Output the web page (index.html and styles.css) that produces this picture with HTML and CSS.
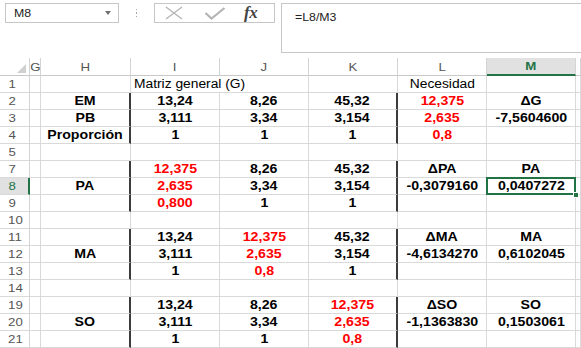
FILE: index.html
```html
<!DOCTYPE html>
<html lang="es">
<head>
<meta charset="utf-8">
<title>Hoja</title>
<link rel="stylesheet" href="styles.css">
</head>
<body>
<div class="topbar">
  <div class="namebox"><span class="nb-text">M8</span><span class="nb-arrow"></span></div>
  <div class="sep"><span></span><span></span><span></span></div>
  <div class="fnbox">
    <svg class="ic-x" width="20" height="14" viewBox="0 0 20 14"><path d="M2 1 L18 13 M18 1 L2 13" stroke="#b4b4b4" stroke-width="1.3" fill="none"/></svg>
    <svg class="ic-ok" width="22" height="14" viewBox="0 0 22 14"><path d="M1.5 7 L7.5 12.5 L20.5 2" stroke="#b4b4b4" stroke-width="2.2" fill="none"/></svg>
    <span class="fx">fx</span>
  </div>
  <div class="formula"><span class="ftext">=L8/M3</span></div>
</div>

<div class="sheet">
  <!-- header row -->
  <div class="c hd corner"><span class="tri"></span></div>
  <div class="c hd"><span class="t">G</span></div>
  <div class="c hd"><span class="t">H</span></div>
  <div class="c hd"><span class="t">I</span></div>
  <div class="c hd"><span class="t">J</span></div>
  <div class="c hd"><span class="t">K</span></div>
  <div class="c hd"><span class="t">L</span></div>
  <div class="c hd sel-col"><span class="t">M</span></div>
  <div class="c hd"></div>

  <!-- 1 -->
  <div class="c rh"><span class="t">1</span></div>
  <div class="c"></div>
  <div class="c"></div>
  <div class="c span2 left"><span class="t r">Matriz general (G)</span></div>
  <div class="c"></div>
  <div class="c"><span class="t r">Necesidad</span></div>
  <div class="c"></div>
  <div class="c"></div>

  <!-- 2 -->
  <div class="c rh"><span class="t">2</span></div>
  <div class="c"></div>
  <div class="c thick"><span class="t b">EM</span></div>
  <div class="c"><span class="t b">13,24</span></div>
  <div class="c"><span class="t b">8,26</span></div>
  <div class="c thick"><span class="t b">45,32</span></div>
  <div class="c"><span class="t b red">12,375</span></div>
  <div class="c"><span class="t b">ΔG</span></div>
  <div class="c"></div>

  <!-- 3 -->
  <div class="c rh"><span class="t">3</span></div>
  <div class="c"></div>
  <div class="c thick"><span class="t b">PB</span></div>
  <div class="c"><span class="t b">3,111</span></div>
  <div class="c"><span class="t b">3,34</span></div>
  <div class="c thick"><span class="t b">3,154</span></div>
  <div class="c"><span class="t b red">2,635</span></div>
  <div class="c"><span class="t b">-7,5604600</span></div>
  <div class="c"></div>

  <!-- 4 -->
  <div class="c rh"><span class="t">4</span></div>
  <div class="c"></div>
  <div class="c thick"><span class="t b">Proporción</span></div>
  <div class="c"><span class="t b">1</span></div>
  <div class="c"><span class="t b">1</span></div>
  <div class="c thick"><span class="t b">1</span></div>
  <div class="c"><span class="t b red">0,8</span></div>
  <div class="c"></div>
  <div class="c"></div>

  <!-- 5 -->
  <div class="c rh"><span class="t">5</span></div>
  <div class="c"></div><div class="c"></div><div class="c"></div><div class="c"></div>
  <div class="c"></div><div class="c"></div><div class="c"></div><div class="c"></div>

  <!-- 7 -->
  <div class="c rh"><span class="t">7</span></div>
  <div class="c"></div>
  <div class="c thick"></div>
  <div class="c"><span class="t b red">12,375</span></div>
  <div class="c"><span class="t b">8,26</span></div>
  <div class="c thick"><span class="t b">45,32</span></div>
  <div class="c"><span class="t b">ΔPA</span></div>
  <div class="c"><span class="t b">PA</span></div>
  <div class="c"></div>

  <!-- 8 -->
  <div class="c rh sel-row"><span class="t">8</span></div>
  <div class="c"></div>
  <div class="c thick"><span class="t b">PA</span></div>
  <div class="c"><span class="t b red">2,635</span></div>
  <div class="c"><span class="t b">3,34</span></div>
  <div class="c thick"><span class="t b">3,154</span></div>
  <div class="c"><span class="t b">-0,3079160</span></div>
  <div class="c active"><span class="t b">0,0407272</span><span class="handle"></span></div>
  <div class="c"></div>

  <!-- 9 -->
  <div class="c rh"><span class="t">9</span></div>
  <div class="c"></div>
  <div class="c thick"></div>
  <div class="c"><span class="t b red">0,800</span></div>
  <div class="c"><span class="t b">1</span></div>
  <div class="c thick"><span class="t b">1</span></div>
  <div class="c"></div>
  <div class="c"></div>
  <div class="c"></div>

  <!-- 10 -->
  <div class="c rh"><span class="t">10</span></div>
  <div class="c"></div><div class="c"></div><div class="c"></div><div class="c"></div>
  <div class="c"></div><div class="c"></div><div class="c"></div><div class="c"></div>

  <!-- 11 -->
  <div class="c rh"><span class="t">11</span></div>
  <div class="c"></div>
  <div class="c thick"></div>
  <div class="c"><span class="t b">13,24</span></div>
  <div class="c"><span class="t b red">12,375</span></div>
  <div class="c thick"><span class="t b">45,32</span></div>
  <div class="c"><span class="t b">ΔMA</span></div>
  <div class="c"><span class="t b">MA</span></div>
  <div class="c"></div>

  <!-- 12 -->
  <div class="c rh"><span class="t">12</span></div>
  <div class="c"></div>
  <div class="c thick"><span class="t b">MA</span></div>
  <div class="c"><span class="t b">3,111</span></div>
  <div class="c"><span class="t b red">2,635</span></div>
  <div class="c thick"><span class="t b">3,154</span></div>
  <div class="c"><span class="t b">-4,6134270</span></div>
  <div class="c"><span class="t b">0,6102045</span></div>
  <div class="c"></div>

  <!-- 13 -->
  <div class="c rh"><span class="t">13</span></div>
  <div class="c"></div>
  <div class="c thick"></div>
  <div class="c"><span class="t b">1</span></div>
  <div class="c"><span class="t b red">0,8</span></div>
  <div class="c thick"><span class="t b">1</span></div>
  <div class="c"></div>
  <div class="c"></div>
  <div class="c"></div>

  <!-- 14 -->
  <div class="c rh"><span class="t">14</span></div>
  <div class="c"></div><div class="c"></div><div class="c"></div><div class="c"></div>
  <div class="c"></div><div class="c"></div><div class="c"></div><div class="c"></div>

  <!-- 19 -->
  <div class="c rh"><span class="t">19</span></div>
  <div class="c"></div>
  <div class="c thick"></div>
  <div class="c"><span class="t b">13,24</span></div>
  <div class="c"><span class="t b">8,26</span></div>
  <div class="c thick"><span class="t b red">12,375</span></div>
  <div class="c"><span class="t b">ΔSO</span></div>
  <div class="c"><span class="t b">SO</span></div>
  <div class="c"></div>

  <!-- 20 -->
  <div class="c rh"><span class="t">20</span></div>
  <div class="c"></div>
  <div class="c thick"><span class="t b">SO</span></div>
  <div class="c"><span class="t b">3,111</span></div>
  <div class="c"><span class="t b">3,34</span></div>
  <div class="c thick"><span class="t b red">2,635</span></div>
  <div class="c"><span class="t b">-1,1363830</span></div>
  <div class="c"><span class="t b">0,1503061</span></div>
  <div class="c"></div>

  <!-- 21 -->
  <div class="c rh"><span class="t">21</span></div>
  <div class="c"></div>
  <div class="c thick"></div>
  <div class="c"><span class="t b">1</span></div>
  <div class="c"><span class="t b">1</span></div>
  <div class="c thick"><span class="t b red">0,8</span></div>
  <div class="c"></div>
  <div class="c"></div>
  <div class="c"></div>
</div>
</body>
</html>
```

FILE: styles.css
```css
* { box-sizing: border-box; }
html, body { margin: 0; padding: 0; background: #fff; }
body {
  width: 581px;
  height: 348px;
  overflow: hidden;
  font-family: "Liberation Sans", Arial, sans-serif;
  color: #000;
}

/* ---------- formula bar ---------- */
.topbar {
  height: 58px;
  display: flex;
  align-items: flex-start;
  padding-top: 3px;
  background: #fff;
}
.namebox {
  margin-left: 5px;
  width: 114px;
  height: 20px;
  border: 1px solid #c6c6c6;
  display: flex;
  align-items: center;
  justify-content: space-between;
  padding: 0 7px 0 8px;
}
.nb-text {
  font-size: 11px;
  color: #222;
  display: inline-block;
  transform: scaleX(1.12);
  transform-origin: left center;
}
.nb-arrow {
  width: 0; height: 0;
  border-left: 3.5px solid transparent;
  border-right: 3.5px solid transparent;
  border-top: 4px solid #707070;
}
.sep {
  width: 35px;
  height: 20px;
  display: flex;
  flex-direction: column;
  align-items: center;
  justify-content: center;
  gap: 2px;
}
.sep span {
  width: 1.5px; height: 1.5px;
  background: #a8a8a8;
  display: block;
}
.fnbox {
  width: 121px;
  height: 20px;
  border: 1px solid #c6c6c6;
  display: flex;
  align-items: center;
  padding-left: 9px;
}
.ic-x { margin-top: -1px; }
.ic-ok { margin-left: 20px; }
.fx {
  margin-left: 18px;
  font-family: "Liberation Serif", "Times New Roman", serif;
  font-style: italic;
  font-weight: bold;
  font-size: 17px;
  color: #444;
  line-height: 18px;
  letter-spacing: -0.5px;
}
.formula {
  margin-left: 6px;
  flex: 1;
  height: 50px;
  border: 1px solid #c6c6c6;
  border-right: none;
  padding: 3px 0 0 13px;
}
.ftext {
  font-size: 11px;
  color: #222;
  display: inline-block;
  transform: scaleX(1.12);
  transform-origin: left center;
}

/* ---------- sheet grid ---------- */
.sheet {
  display: grid;
  grid-template-columns: 30px 11px 90px 89px 89px 89px 89px 89px 1fr;
  grid-template-rows: 18px repeat(16, 17px);
}
.c {
  border-right: 1px solid #d9d9d9;
  border-bottom: 1px solid #d9d9d9;
  display: flex;
  align-items: center;
  justify-content: center;
  overflow: visible;
  white-space: nowrap;
  position: relative;
  font-size: 12px;
  line-height: 16px;
}
.span2 { grid-column: span 2; }
.left { justify-content: flex-start; padding-left: 3px; }

.t {
  display: inline-block;
  transform: scaleX(1.15);
}
.left .t { transform-origin: left center; }
.b { font-weight: bold; transform: scaleX(1.18); }
.left .b { transform-origin: left center; }
.r { font-weight: normal; }
.red { color: #ff0000; }

.thick { border-right: 2px solid #3c3c3c; }

/* headers */
.hd {
  border-right-color: #d4d4d4;
  border-bottom: 1px solid #c8c8c8;
  color: #555;
  font-size: 11.5px;
}
.corner { align-items: flex-end; justify-content: flex-end; padding: 0 3px 2px 0; }
.tri {
  width: 0; height: 0;
  border-left: 9px solid transparent;
  border-bottom: 9px solid #d0d0d0;
}
.rh {
  color: #555;
  font-size: 11.5px;
  justify-content: flex-start;
  padding-left: 9px;
  border-right-color: #d4d4d4;
}
.sel-col {
  background: #e1e1e1;
  border-bottom: 2px solid #217346;
  color: #217346;
  font-weight: bold;
}
.sel-row {
  background: #e1e1e1;
  border-right: 2px solid #217346;
  color: #217346;
}

.active { z-index: 2; }
.active::before {
  content: "";
  position: absolute;
  left: -1px; top: -1px; right: -1px; bottom: -1px;
  border: 2px solid #217346;
  pointer-events: none;
}
.handle {
  position: absolute;
  right: -4px;
  bottom: -4px;
  width: 6px;
  height: 6px;
  background: #217346;
  border: 1px solid #fff;
  z-index: 3;
}
```
